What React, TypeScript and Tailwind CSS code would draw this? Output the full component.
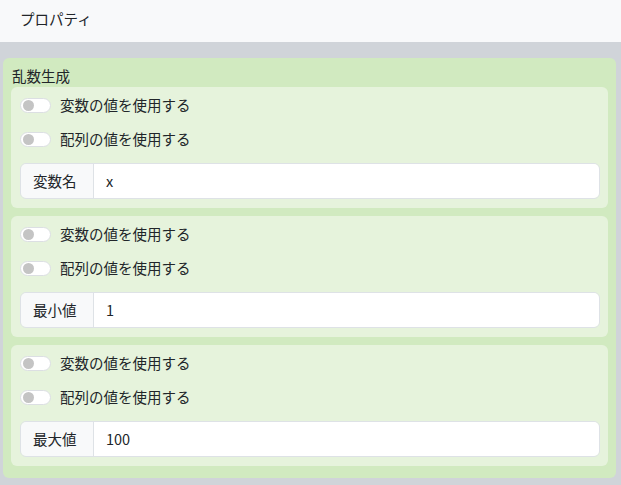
const FONT = { fontFamily: '"Noto Sans CJK JP", "Noto Sans", sans-serif' };

function Toggle({ label }: { label: string }) {
  return (
    <div className="flex items-center h-5 gap-[9px]">
      <span className="relative w-[31px] h-[15px] rounded-full bg-white border border-[#dcdfe3] shrink-0">
        <span className="absolute left-[2px] top-[1px] w-[11px] h-[11px] rounded-full bg-[#c4c4c4]" />
      </span>
      <span className="text-[14.5px] text-[#212529]">{label}</span>
    </div>
  );
}

function Block({ name, value }: { name: string; value: string }) {
  return (
    <div className="flex flex-col gap-[14px] bg-[#e6f3dc] rounded-md pl-[9px] pr-2 pt-2 pb-[9px]">
      <Toggle label="変数の値を使用する" />
      <Toggle label="配列の値を使用する" />
      <div className="flex h-9 border border-[#dee2e6] rounded-md overflow-hidden text-[14.5px] text-[#212529]">
        <div className="w-[73px] shrink-0 flex items-center px-3 bg-[#f8f9fa] border-r border-[#dee2e6]">{name}</div>
        <div className="flex-1 flex items-center px-3 bg-white">{value}</div>
      </div>
    </div>
  );
}

export default function App() {
  return (
    <div className="w-[621px] h-[485px] bg-[#d0d4d9] overflow-hidden" style={FONT}>
      <div className="h-[42px] bg-[#f8f9fa] flex items-center px-5 pb-[4px] text-[14.5px] text-[#212529]">プロパティ</div>
      <div className="pt-4 pl-[3px] pr-[5px]">
        <div className="bg-[#d1eac0] rounded-md px-2 pt-2 pb-3">
          <div className="h-[21px] leading-5 text-[14.5px] text-[#212529] pl-px">乱数生成</div>
          <div className="flex flex-col gap-2">
            <Block name="変数名" value="x" />
            <Block name="最小値" value="1" />
            <Block name="最大値" value="100" />
          </div>
        </div>
      </div>
    </div>
  );
}
